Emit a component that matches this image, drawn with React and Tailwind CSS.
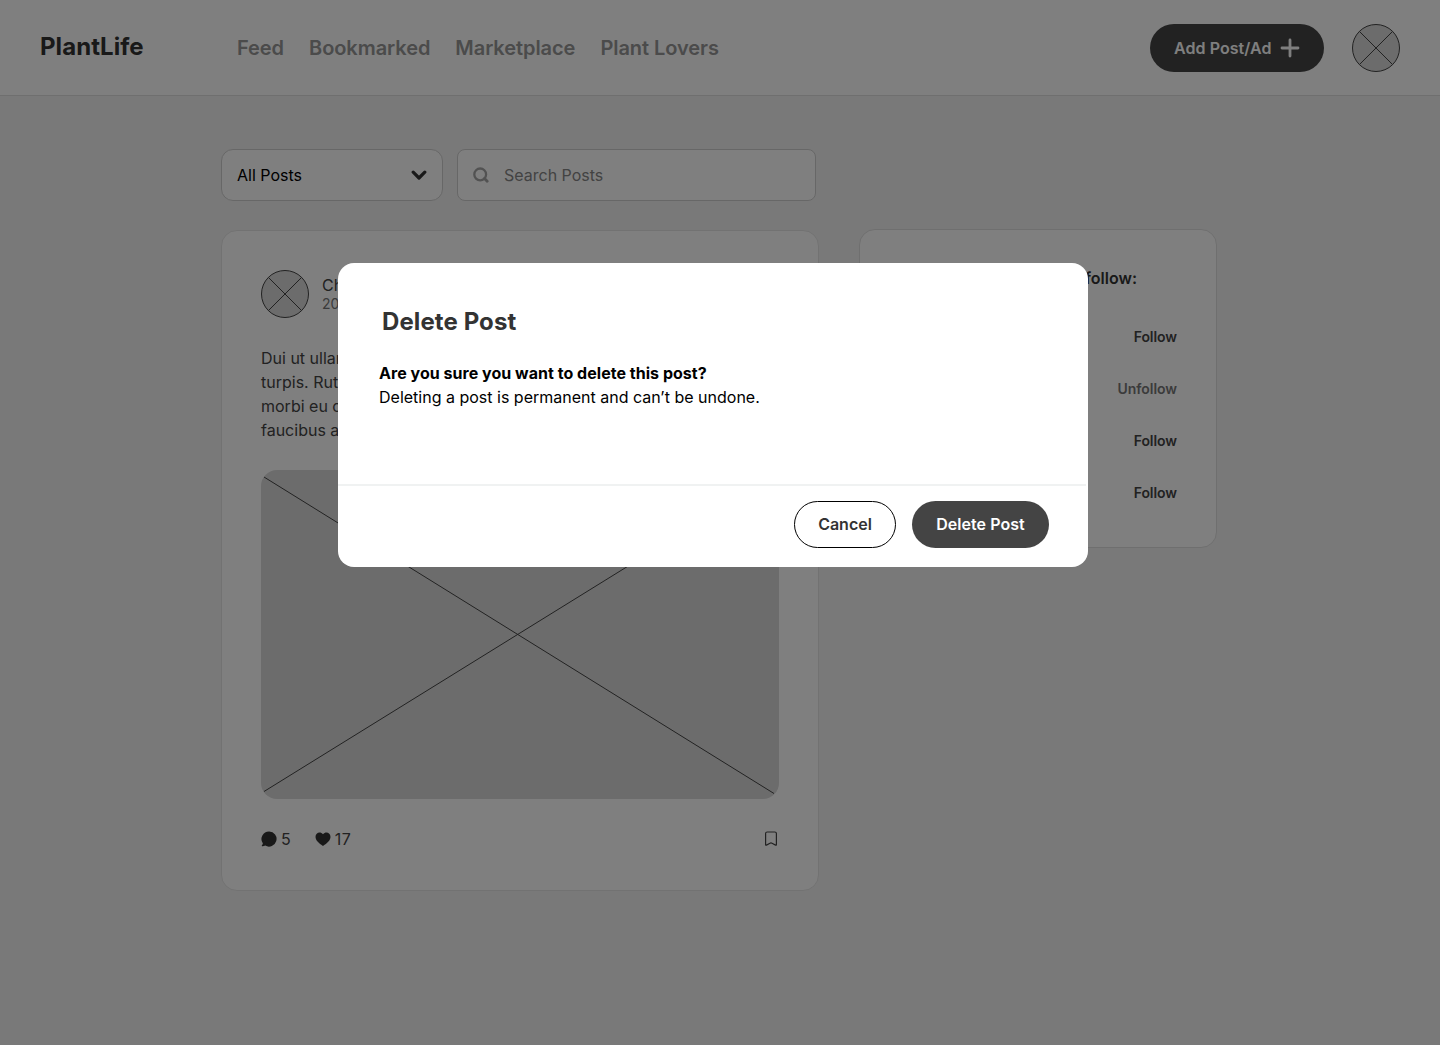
const NAV = ['Feed', 'Bookmarked', 'Marketplace', 'Plant Lovers'];
const PEOPLE = [
  { action: 'Follow', following: false },
  { action: 'Unfollow', following: true },
  { action: 'Follow', following: false },
  { action: 'Follow', following: false },
];

function Avatar() {
  return (
    <svg className="block size-12 shrink-0" viewBox="0 0 48 48" fill="none" stroke="#444">
      <circle cx="24" cy="24" r="23.5" fill="#d9d9d9" />
      <path d="M7.4 7.4 40.6 40.6M40.6 7.4 7.4 40.6" />
    </svg>
  );
}

function Header() {
  return (
    <header className="flex h-24 items-center border-b border-[#dedede] bg-white pr-10 pl-10">
      <div className="w-[197px] pb-[2px] text-2xl leading-8 font-bold tracking-[0.05px] text-[#333]">PlantLife</div>
      <nav className="flex gap-[25px] text-xl font-semibold tracking-[-0.06px] text-[#969696]">
        {NAV.map((item) => (
          <a key={item}>{item}</a>
        ))}
      </nav>
      <button className="mr-7 ml-auto flex h-12 w-[174px] items-center justify-between rounded-full bg-[#444] pr-[24px] pl-6 font-semibold tracking-[0.06px] text-white">
        Add Post/Ad
        <svg className="size-5" viewBox="0 0 20 20" stroke="currentColor" strokeWidth="2.8" strokeLinecap="round">
          <path d="M10 2v16M2 10h16" />
        </svg>
      </button>
      <Avatar />
    </header>
  );
}

function Filters() {
  return (
    <div className="flex gap-[14px]">
      <div className="flex h-[52px] w-[222px] items-center justify-between rounded-xl border border-[#cfcfcf] bg-white px-[15px] text-black">
        All Posts
        <svg className="size-4" viewBox="0 0 16 16" fill="none" stroke="#333" strokeWidth="3.2" strokeLinecap="round" strokeLinejoin="round">
          <path d="M2.2 5.2 8 11l5.800-5.800" />
        </svg>
      </div>
      <div className="flex h-[52px] w-[359px] items-center rounded-lg border border-[#cfcfcf] bg-white pl-[15px] text-[#868686]">
        <svg className="mr-[15px] size-4" viewBox="0 0 16 16" fill="none" stroke="#a5a5a5" strokeWidth="2.3" strokeLinecap="round">
          <circle cx="7.2" cy="7.4" r="5.9" />
          <path d="m11.500 11.500 2.700 2.800" strokeWidth="2.8" />
        </svg>
        Search Posts
      </div>
    </div>
  );
}

function Post() {
  return (
    <article className="mt-px h-[661px] w-[598px] rounded-[16px] border border-[#e5e5e5] bg-white px-[39px] pt-[39px] text-[#444]">
      <div className="flex gap-[13px]">
        <Avatar />
        <div className="pt-[5px]">
          <div className="leading-5">Charlotte</div>
          <div className="text-sm leading-[18px] text-[#777]">20 min</div>
        </div>
      </div>
      <p className="mt-7 leading-6">
        Dui ut ullamcorper
        <br />
        turpis. Rutrum
        <br />
        morbi eu dui
        <br />
        faucibus at
      </p>
      <svg className="mt-7 block h-[329px] w-[518px] rounded-[16px] bg-[#d9d9d9]" viewBox="0 0 518 329" stroke="#444">
        <path d="M3 7 513 323.5M3 321.5 511 7" />
      </svg>
      <div className="mt-7 flex h-6 items-center">
        <svg className="mr-1 size-4" viewBox="0 0 16 16" fill="#333">
          <path d="M8.2.4a7.6 7.6 0 1 1-4 14.2c-1.1.6-2.3.8-3.1.6-.5-.1-.5-.5-.1-.9.6-.7.9-1.4.8-2A7.6 7.6 0 0 1 8.2.4Z" />
        </svg>
        5
        <svg className="mr-1 ml-6 size-4" viewBox="0 0 16 16" fill="#333">
          <path d="M8 14.9C6.8 14.2.5 10.4.5 6 .5 1.3 5.6.2 8 3.3 10.4.2 15.5 1.3 15.5 6c0 4.4-6.3 8.2-7.5 8.9Z" />
        </svg>
        <span className="tracking-[0.6px]">17</span>
        <svg className="mr-[2px] mb-px ml-auto h-[15px] w-3" viewBox="0 0 12 15" fill="none" stroke="#444" strokeWidth="1.2" strokeLinejoin="round">
          <path d="M.6 2.6Q.6 1 2.2 1h7.600q1.600 0 1.600 1.600v11q0 .9-.8.5L7 12.200q-1-.5-2 0l-3.600 1.900q-.8.4-.8-.5Z" />
        </svg>
      </div>
    </article>
  );
}

function Suggestions() {
  return (
    <aside className="h-[319px] w-[358px] rounded-[16px] border border-[#dfdfdf] bg-white px-[39px] pt-[36px]">
      <h2 className="mr-10 text-right leading-6 font-semibold text-[#333]">Plant Lovers to follow:</h2>
      <ul className="mt-9 flex flex-col gap-8 pt-px text-right text-sm leading-5 font-semibold tracking-[-0.06px]">
        {PEOPLE.map((person, i) => (
          <li key={i} className={person.following ? 'text-[#777]' : 'text-[#444]'}>
            {person.action}
          </li>
        ))}
      </ul>
    </aside>
  );
}

function DeleteDialog() {
  return (
    <div className="absolute inset-0 bg-black/50 pt-[263px] pl-[338px]">
      <section role="dialog" className="flex h-[304px] w-[750px] flex-col rounded-[16px] bg-white">
        <div className="h-[221px] px-[41px] pt-[43px]">
          <h1 className="pl-[3px] text-2xl leading-8 font-bold tracking-[0.1px] text-[#333]">Delete Post</h1>
          <p className="mt-[23px] leading-6 font-bold tracking-[0.03px] text-black">Are you sure you want to delete this post?</p>
          <p className="leading-6 text-black">Deleting a post is permanent and can’t be undone.</p>
        </div>
        <div className="mr-[2px] flex justify-end gap-4 border-t-2 border-[#f0f2f2] pt-[15px] pr-[37px] font-semibold">
          <button className="h-[47px] w-[102px] rounded-full border border-black pb-px text-[#333]">Cancel</button>
          <button className="h-[47px] w-[137px] rounded-full bg-[#444] pb-px tracking-[0.06px] text-white">Delete Post</button>
        </div>
      </section>
    </div>
  );
}

export default function App() {
  return (
    <div className="relative h-[1045px] w-[1440px] overflow-hidden bg-[#f2f2f2] font-['Inter',sans-serif]">
      <Header />
      <main className="pt-[53px] pl-[221px]">
        <Filters />
        <div className="mt-7 flex items-start gap-10">
          <Post />
          <Suggestions />
        </div>
      </main>
      <DeleteDialog />
    </div>
  );
}
